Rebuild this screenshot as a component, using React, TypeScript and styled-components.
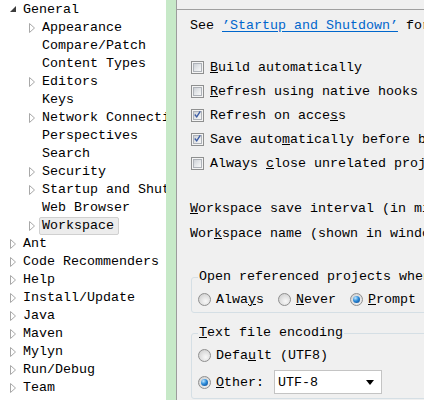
import React from 'react'
import styled, { createGlobalStyle } from 'styled-components'

const GlobalStyle = createGlobalStyle`
  html, body {
    margin: 0;
    padding: 0;
    width: 424px;
    height: 400px;
    overflow: hidden;
    background: #f0f0f0;
  }
  body {
    font-family: "Liberation Mono", "DejaVu Sans Mono", monospace;
    font-size: 13.333px;
    color: #000;
  }
`

const Window = styled.div`
  display: flex;
  width: 424px;
  height: 400px;
  overflow: hidden;
`

const Tree = styled.ul`
  flex: 0 0 166px;
  margin: 0;
  padding: 0;
  list-style: none;
  background: #fff;
  overflow: hidden;
`

const TreeRow = styled.li<{ $level: number }>`
  display: flex;
  align-items: center;
  box-sizing: border-box;
  height: 18px;
  padding-top: 2px;
  padding-left: ${p => 8 + p.$level * 19}px;
  white-space: nowrap;
`

const Twisty = styled.span`
  flex: 0 0 13px;
  height: 16px;
  margin-right: 2px;
  display: flex;
  align-items: center;
`

const TreeLabel = styled.span<{ $selected?: boolean }>`
  line-height: 16px;
  margin-left: -3px;
  padding: 0 4px 0 2px;
  border: 1px solid ${p => (p.$selected ? '#d0d0d0' : 'transparent')};
  border-radius: 2px;
  background: ${p => (p.$selected ? '#ececec' : 'transparent')};
`

const Sash = styled.div`
  flex: 0 0 10px;
  background: #c7e9c8;
  border-right: 1px solid #9c9c9c;
`

const Panel = styled.div`
  flex: 1;
  min-width: 0;
  overflow: hidden;
  background: #f0f0f0;
`

const Header = styled.div`
  height: 9px;
  border-bottom: 1px solid #a0a0a0;
`

const Body = styled.div`
  width: 560px;
  padding: 3px 0 0 13px;
  white-space: nowrap;
`

const Line = styled.div<{ $h?: number; $mt?: number }>`
  display: flex;
  align-items: center;
  height: ${p => p.$h ?? 24}px;
  margin-top: ${p => p.$mt ?? 0}px;
`

const Link = styled.span`
  color: #0066cc;
  text-decoration: underline;
  text-underline-offset: 2px;
`

const Box = styled.span`
  flex: 0 0 13px;
  width: 13px;
  height: 13px;
  box-sizing: border-box;
  margin: 0 6px 0 1px;
  border: 1px solid #8e8f8f;
  background: #f4f4f4;
  display: flex;
  align-items: center;
  justify-content: center;
`

const BoxInner = styled.span`
  width: 9px;
  height: 9px;
  box-sizing: border-box;
  border: 1px solid #aeb2b8;
  background: linear-gradient(135deg, #cdd1d6 0%, #e8eaec 60%, #f7f7f7 100%);
  display: flex;
  align-items: center;
  justify-content: center;
`

const Fieldset = styled.fieldset<{ $mt: number }>`
  margin: ${p => p.$mt}px 0 0 1px;
  padding: 0 6px 0 6px;
  border: 1px solid #d5dfe5;
  border-radius: 3px;
  min-width: 0;
`

const Legend = styled.legend`
  padding: 0 1px;
  line-height: 18px;
`

const RadioGroup = styled.div`
  display: flex;
  align-items: center;
  gap: 14px;
`

const RadioItem = styled.span`
  display: flex;
  align-items: center;
`

const Radio = styled.span<{ $on?: boolean }>`
  flex: 0 0 13px;
  width: 13px;
  height: 13px;
  box-sizing: border-box;
  margin-right: 5px;
  border-radius: 50%;
  border: 1px solid #8f8f8f;
  background: radial-gradient(circle at 60% 65%, #f8f8f8 0%, #dcdcdc 60%, #c8c8c8 100%);
  display: flex;
  align-items: center;
  justify-content: center;
  &::after {
    content: '';
    display: ${p => (p.$on ? 'block' : 'none')};
    width: 7px;
    height: 7px;
    border-radius: 50%;
    background: radial-gradient(circle at 35% 30%, #bfe6ff 0%, #2a8ad8 45%, #0b3f86 100%);
  }
`

const Combo = styled.span`
  display: flex;
  align-items: center;
  justify-content: space-between;
  width: 108px;
  height: 24px;
  box-sizing: border-box;
  margin-left: 10px;
  padding: 0 7px 0 3px;
  background: #fff;
  border: 1px solid #c4c4c4;
`

function Expanded() {
  return (
    <svg width="13" height="16" viewBox="0 0 13 16">
      <polygon points="8,4 8,10 2,10" fill="#3c3c3c" />
    </svg>
  )
}

function Collapsed() {
  return (
    <svg width="13" height="16" viewBox="0 0 13 16">
      <polygon points="2.5,3.5 7.5,8 2.5,12.5" fill="#fff" stroke="#a8a8a8" />
    </svg>
  )
}

function Check() {
  return (
    <svg width="9" height="9" viewBox="0 0 9 9" style={{ marginTop: -2 }}>
      <path d="M1 4.5 L3.5 7.5 L8 0.5" fill="none" stroke="#3d5da4" strokeWidth="1.8" />
    </svg>
  )
}

function Checkbox({ checked }: { checked?: boolean }) {
  return (
    <Box>
      <BoxInner>{checked && <Check />}</BoxInner>
    </Box>
  )
}

type Node = { label: string; level: number; kind: 'open' | 'closed' | 'leaf'; selected?: boolean }

const nodes: Node[] = [
  { label: 'General', level: 0, kind: 'open' },
  { label: 'Appearance', level: 1, kind: 'closed' },
  { label: 'Compare/Patch', level: 1, kind: 'leaf' },
  { label: 'Content Types', level: 1, kind: 'leaf' },
  { label: 'Editors', level: 1, kind: 'closed' },
  { label: 'Keys', level: 1, kind: 'leaf' },
  { label: 'Network Connections', level: 1, kind: 'closed' },
  { label: 'Perspectives', level: 1, kind: 'leaf' },
  { label: 'Search', level: 1, kind: 'leaf' },
  { label: 'Security', level: 1, kind: 'closed' },
  { label: 'Startup and Shutdown', level: 1, kind: 'closed' },
  { label: 'Web Browser', level: 1, kind: 'leaf' },
  { label: 'Workspace', level: 1, kind: 'closed', selected: true },
  { label: 'Ant', level: 0, kind: 'closed' },
  { label: 'Code Recommenders', level: 0, kind: 'closed' },
  { label: 'Help', level: 0, kind: 'closed' },
  { label: 'Install/Update', level: 0, kind: 'closed' },
  { label: 'Java', level: 0, kind: 'closed' },
  { label: 'Maven', level: 0, kind: 'closed' },
  { label: 'Mylyn', level: 0, kind: 'closed' },
  { label: 'Run/Debug', level: 0, kind: 'closed' },
  { label: 'Team', level: 0, kind: 'closed' },
]

export default function App() {
  return (
    <>
      <GlobalStyle />
      <Window>
        <Tree>
          {nodes.map(n => (
            <TreeRow key={n.label} $level={n.level}>
              <Twisty>{n.kind === 'open' ? <Expanded /> : n.kind === 'closed' ? <Collapsed /> : null}</Twisty>
              <TreeLabel $selected={n.selected}>{n.label}</TreeLabel>
            </TreeRow>
          ))}
        </Tree>
        <Sash />
        <Panel>
          <Header />
          <Body>
            <Line>
              See&nbsp;<Link>’Startup and Shutdown’</Link>&nbsp;for workspace startup and shutdown preferences.
            </Line>
            <Line $mt={18}>
              <Checkbox /><span><u>B</u>uild automatically</span>
            </Line>
            <Line>
              <Checkbox /><span><u>R</u>efresh using native hooks or polling</span>
            </Line>
            <Line>
              <Checkbox checked /><span>Refresh on acce<u>s</u>s</span>
            </Line>
            <Line>
              <Checkbox checked /><span>Save auto<u>m</u>atically before build</span>
            </Line>
            <Line>
              <Checkbox /><span>Always <u>c</u>lose unrelated projects without prompt</span>
            </Line>
            <Line $h={25} $mt={21}>
              <span><u>W</u>orkspace save interval (in minutes):</span>
            </Line>
            <Line $h={25}>
              <span>Wor<u>k</u>space name (shown in window title):</span>
            </Line>
            <Fieldset $mt={22}>
              <Legend>Open referenced projects when a project is opened</Legend>
              <Line $mt={1}>
                <RadioGroup>
                  <RadioItem><Radio /><span>Alwa<u>y</u>s</span></RadioItem>
                  <RadioItem><Radio /><span><u>N</u>ever</span></RadioItem>
                  <RadioItem><Radio $on /><span><u>P</u>rompt</span></RadioItem>
                </RadioGroup>
              </Line>
              <Line $h={1} />
            </Fieldset>
            <Fieldset $mt={11}>
              <Legend><u>T</u>ext file encoding</Legend>
              <Line $mt={1}>
                <RadioItem><Radio /><span>Defa<u>u</u>lt (UTF8)</span></RadioItem>
              </Line>
              <Line $h={26} $mt={2}>
                <RadioItem><Radio $on /><span><u>O</u>ther:</span></RadioItem>
                <Combo>
                  <span>UTF-8</span>
                  <svg width="8" height="5" viewBox="0 0 8 5"><polygon points="0,0 8,0 4,5" fill="#000" /></svg>
                </Combo>
              </Line>
              <Line $h={3} />
            </Fieldset>
          </Body>
        </Panel>
      </Window>
    </>
  )
}
